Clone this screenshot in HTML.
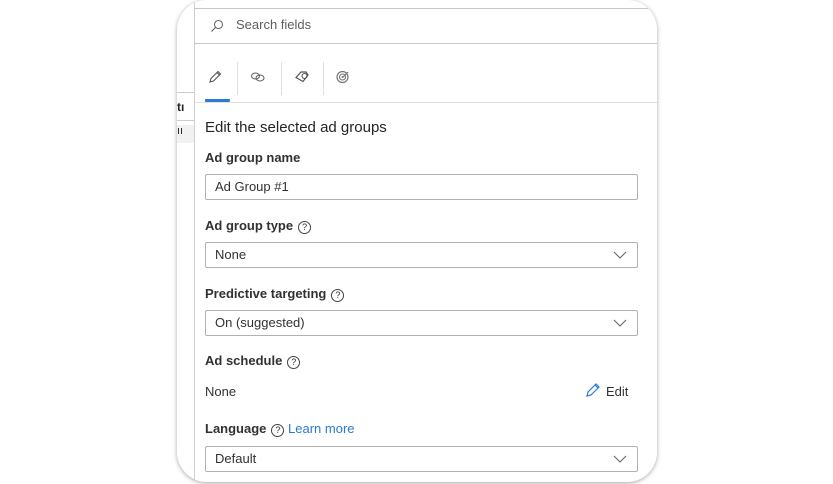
<!DOCTYPE html>
<html><head><meta charset="utf-8"><style>
*{margin:0;padding:0;box-sizing:border-box}
html,body{width:833px;height:484px;background:#fff;overflow:hidden;font-family:"Liberation Sans",sans-serif;color:#252423}
.card{position:absolute;left:177px;top:0;width:480px;height:482px;border-radius:30px;background:#fff;box-shadow:0 1px 4px rgba(0,0,0,.35);overflow:hidden}
.abs{position:absolute}
.panel{position:absolute;left:17px;top:0;width:463px;height:482px;border-left:1px solid #d0d0d0;background:#fff;overflow:hidden}
.lbl{position:absolute;left:10px;font-size:13px;font-weight:bold;color:#323130}
.inp{position:absolute;left:10px;width:433px;height:26px;border:1px solid #b3b0ad;border-radius:2px;font-size:13px;line-height:24px;padding-left:9px;color:#323130}
.chev{position:absolute;right:10px;top:7px}
.help{display:inline-block;width:13px;height:13px;border:1px solid #444;border-radius:50%;font-size:9px;line-height:11px;text-align:center;font-weight:normal;margin-left:5px;vertical-align:0px}
.sep{position:absolute;top:62px;width:1px;height:33px;background:#e1dfdd}
</style></head><body>
<div class="card">
  <div class="abs" style="left:0;top:92px;width:17px;height:1px;background:#ccc"></div>
  <div class="abs" style="left:0;top:100px;font-size:12px;font-weight:bold">tı</div>
  <div class="abs" style="left:0;top:120px;width:17px;height:1px;background:#ccc"></div>
  <div class="abs" style="left:0;top:125px;width:17px;height:18px;background:#f1f1f1;font-size:11px">ıı</div>
  <div class="panel">
    <div class="abs" style="left:0;top:8px;width:463px;height:36px;border-top:1px solid #c8c6c4;border-bottom:1px solid #c8c6c4"></div>
    <svg class="abs" style="left:15px;top:19px" width="14" height="14" viewBox="0 0 14 14"><circle cx="8.5" cy="5.5" r="4" fill="none" stroke="#666" stroke-width="1.1"/><path d="M5.5 8.5L1.5 12.5" stroke="#666" stroke-width="1.2"/></svg>
    <div class="abs" style="left:41px;top:17px;font-size:13px;color:#605e5c">Search fields</div>
    <svg class="abs" style="left:12px;top:69px" width="16" height="16" viewBox="0 0 16 16"><path d="M3 13l1-3.5 7-7 2.5 2.5-7 7z M10 3.5l2.5 2.5" fill="none" stroke="#555" stroke-width="1.1"/></svg>
    <div class="sep" style="left:42px"></div>
    <svg class="abs" style="left:55px;top:70px" width="16" height="14" viewBox="0 0 16 14"><ellipse cx="5.5" cy="6" rx="4" ry="3" fill="none" stroke="#666" stroke-width="1.1"/><ellipse cx="10" cy="8" rx="4" ry="3" fill="none" stroke="#666" stroke-width="1.1"/></svg>
    <div class="sep" style="left:86px"></div>
    <svg class="abs" style="left:99px;top:69px" width="16" height="16" viewBox="0 0 16 16"><path d="M2 8.5l5-5.5h5l2 3-5 6.5z" fill="none" stroke="#555" stroke-width="1.2"/><circle cx="10.5" cy="7" r="2.5" fill="none" stroke="#555" stroke-width="1.1"/></svg>
    <div class="sep" style="left:128px"></div>
    <svg class="abs" style="left:140px;top:69px" width="16" height="16" viewBox="0 0 16 16"><circle cx="7.5" cy="8" r="5.5" fill="none" stroke="#777" stroke-width="1.2"/><circle cx="7.5" cy="8" r="3" fill="none" stroke="#777" stroke-width="1.1"/><circle cx="7.5" cy="8" r="1" fill="#777"/><path d="M8 8l5-5" stroke="#777" stroke-width="1.2"/></svg>
    <div class="abs" style="left:10px;top:99px;width:25px;height:3px;background:#2a7ad4;border-radius:1px"></div>
    <div class="abs" style="left:0;top:102px;width:463px;height:1px;background:#e1dfdd"></div>
    <div class="abs" style="left:10px;top:119px;font-size:15px;color:#252423">Edit the selected ad groups</div>
    <div class="lbl" style="top:150px">Ad group name</div>
    <div class="inp" style="top:174px">Ad Group #1</div>
    <div class="lbl" style="top:218px">Ad group type<span class="help">?</span></div>
    <div class="inp" style="top:242px">None<svg class="chev" width="14" height="10" viewBox="0 0 14 10"><path d="M1 2l6 6 6-6" fill="none" stroke="#666" stroke-width="1.1"/></svg></div>
    <div class="lbl" style="top:286px">Predictive targeting<span class="help">?</span></div>
    <div class="inp" style="top:310px">On (suggested)<svg class="chev" width="14" height="10" viewBox="0 0 14 10"><path d="M1 2l6 6 6-6" fill="none" stroke="#666" stroke-width="1.1"/></svg></div>
    <div class="lbl" style="top:353px">Ad schedule<span class="help">?</span></div>
    <div class="abs" style="left:10px;top:384px;font-size:13px;color:#323130">None</div>
    <svg class="abs" style="left:390px;top:382px" width="16" height="16" viewBox="0 0 16 16"><path d="M2 14l1-4 8-8 3 3-8 8z M10 3l3 3" fill="none" stroke="#2a7ad4" stroke-width="1.2"/></svg>
    <div class="abs" style="left:411px;top:384px;font-size:13px;color:#323130">Edit</div>
    <div class="lbl" style="top:421px">Language<span class="help">?</span> <span style="font-weight:normal;color:#2a7ad4">Learn more</span></div>
    <div class="inp" style="top:446px">Default<svg class="chev" width="14" height="10" viewBox="0 0 14 10"><path d="M1 2l6 6 6-6" fill="none" stroke="#666" stroke-width="1.1"/></svg></div>
  </div>
</div>
</body></html>
